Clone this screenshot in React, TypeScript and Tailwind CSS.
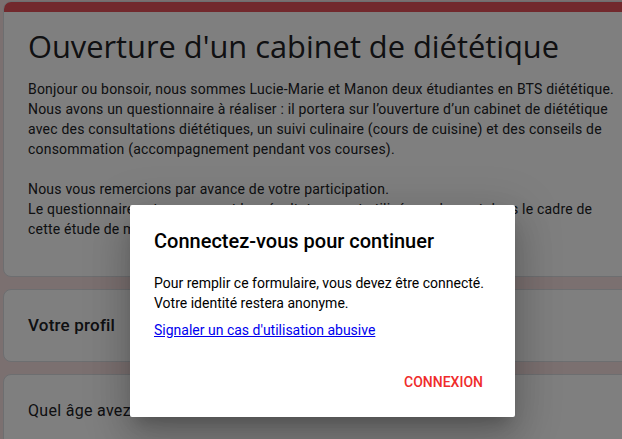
import React from 'react';

const Card = ({ children, className = '' }: { children: React.ReactNode; className?: string }) => (
  <div className={`w-[640px] bg-white rounded-lg border border-[#dadce0] ${className}`}>{children}</div>
);

export default function App() {
  return (
    <div className="relative h-[439px] w-[622px] overflow-hidden bg-[#f6e1e1] font-['Roboto',sans-serif] text-[#202124]">
      <div className="flex flex-col gap-3 pl-[3px] pt-[1px]">
        <Card className="overflow-hidden">
          <div className="h-[10px] bg-[#e4535a]" />
          <div className="px-6 pt-[14px] pb-[37px]">
            <h1 className="text-[30.8px] leading-[40px] font-['Open_Sans',sans-serif] text-[#202124]">
              Ouverture d'un cabinet de diététique
            </h1>
            <div className="mt-[13px] w-[592px] text-[14px] leading-[20px] tracking-[0.2px]">
              <p>
                Bonjour ou bonsoir, nous sommes Lucie-Marie et Manon deux étudiantes en BTS diététique. Nous avons un
                questionnaire à réaliser : il portera sur l’ouverture d’un cabinet de diététique avec des consultations
                diététiques, un suivi culinaire (cours de cuisine) et des conseils de consommation (accompagnement
                pendant vos courses).
              </p>
              <p className="mt-5">Nous vous remercions par avance de votre participation.</p>
              <p>
                Le questionnaire est anonyme et les résultats seront utilisés seulement dans le cadre de cette étude de
                marché.
              </p>
            </div>
          </div>
        </Card>
        <Card className="h-[73px] flex items-center px-6">
          <span className="text-[17px] font-medium tracking-[0.2px]">Votre profil</span>
        </Card>
        <Card className="h-[120px] px-6 pt-[24px]">
          <span className="text-[16px] tracking-[0.3px]">Quel âge avez-vous ?</span>
        </Card>
      </div>

      <div className="absolute inset-0 bg-black/50" />

      <div className="absolute left-[130px] top-[205px] w-[385px] h-[212px] rounded-[2px] bg-white shadow-[0_11px_15px_-7px_rgba(0,0,0,0.2),0_24px_38px_3px_rgba(0,0,0,0.14),0_9px_46px_8px_rgba(0,0,0,0.12)]">
        <div className="px-6 pt-6">
          <h2 className="text-[20px] leading-[24px] font-medium text-black">Connectez-vous pour continuer</h2>
          <p className="mt-5 text-[14px] leading-[20px] text-black">
            Pour remplir ce formulaire, vous devez être connecté.
            <br />
            Votre identité restera anonyme.
          </p>
          <a href="#" className="mt-[7px] block text-[14px] leading-[20px] text-[#0000ee] underline">
            Signaler un cas d'utilisation abusive
          </a>
        </div>
        <div className="flex justify-end px-6 pt-6">
          <button className="h-9 px-2 text-[14px] font-medium uppercase text-[#ef2b2b]">Connexion</button>
        </div>
      </div>
    </div>
  );
}
